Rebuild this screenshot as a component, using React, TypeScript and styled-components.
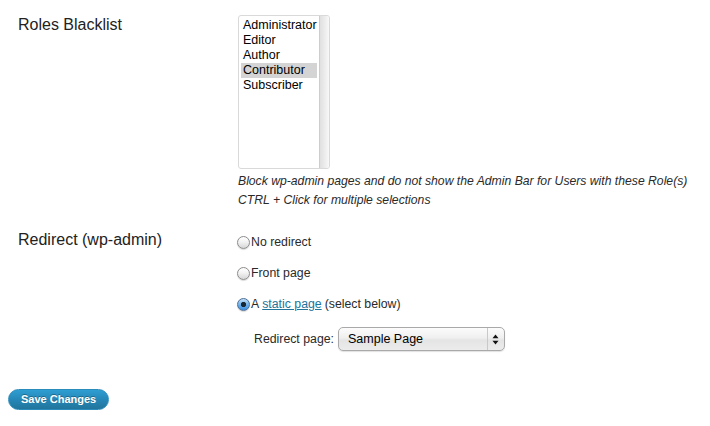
import React from 'react';
import styled, { createGlobalStyle } from 'styled-components';

const Global = createGlobalStyle`
  html, body { margin: 0; padding: 0; background: #fff; }
  body { font-family: "Liberation Sans", Arial, Helvetica, sans-serif; color: #333; }
  * { box-sizing: border-box; }
`;

const Page = styled.div`
  padding: 5px 8px 0 8px;
`;

const FormRow = styled.div`
  display: flex;
  align-items: flex-start;
`;

const Th = styled.div`
  flex: none;
  width: 220px;
  padding: 10px;
  font-size: 16px;
  line-height: 20px;
  color: #222;
`;

const Td = styled.div`
  flex: 1;
  padding: 10px;
`;

const ListBox = styled.div`
  width: 92px;
  height: 154px;
  border: 1px solid #d9d9d9;
  border-radius: 3px;
  display: flex;
  overflow: hidden;
  background: #fff;
`;

const Options = styled.div`
  flex: 1;
  padding: 2px;
  display: flex;
  flex-direction: column;
`;

const Option = styled.div<{ $selected?: boolean }>`
  height: 15px;
  line-height: 15px;
  padding-left: 2px;
  font-size: 12.5px;
  color: #000;
  white-space: nowrap;
  background: ${(p) => (p.$selected ? '#d4d4d4' : 'transparent')};
`;

const ScrollTrack = styled.div`
  flex: none;
  width: 11px;
  border-left: 1px solid #cdcdcd;
  background: linear-gradient(to right, #e0e0e0 0%, #eaeaea 40%, #f5f5f5 80%, #fdfdfd 100%);
`;

const Description = styled.div<{ $first?: boolean }>`
  margin-top: ${(p) => (p.$first ? '3px' : '0')};
  font-size: 12.2px;
  line-height: 19px;
  font-style: italic;
  color: #2a2a2a;
  white-space: nowrap;
`;

const RadioList = styled.div`
  margin-top: 2px;
  display: flex;
  flex-direction: column;
  gap: 11px;
`;

const RadioItem = styled.label`
  display: flex;
  align-items: center;
  height: 20px;
  font-size: 12.3px;
  color: #2a2a2a;
`;

const RadioCircle = styled.span<{ $checked?: boolean }>`
  flex: none;
  width: 13px;
  height: 13px;
  margin-left: -1px;
  margin-right: 1px;
  border-radius: 50%;
  border: 1px solid ${(p) => (p.$checked ? '#4d6f96' : '#8c8c8c')};
  background: ${(p) =>
    p.$checked
      ? 'radial-gradient(circle at 50% 50%, #1b2633 0, #1b2633 2.2px, rgba(27,38,51,0) 3px), linear-gradient(#c4e0f8, #6aaee9 55%, #3d8ee0)'
      : 'linear-gradient(#ffffff, #f2f2f2 45%, #d6d6d6)'};
  box-shadow: 0 1px 1px rgba(0, 0, 0, 0.15);
`;

const Link = styled.a`
  color: #21759b;
  text-decoration: underline;
  margin: 0 3px;
`;

const SelectRow = styled.div`
  margin-top: 13px;
  padding-left: 16px;
  display: flex;
  align-items: center;
  height: 24px;
  font-size: 12.3px;
  color: #2a2a2a;
`;

const SelectBox = styled.div`
  margin-left: 4px;
  width: 167px;
  height: 24px;
  border: 1px solid #a9a9a9;
  border-radius: 5px;
  background: linear-gradient(#fcfcfc, #efefef 45%, #e4e4e4 55%, #ececec);
  box-shadow: 0 1px 1px rgba(0, 0, 0, 0.12);
  display: flex;
  align-items: center;
`;

const SelectValue = styled.span`
  flex: 1;
  padding-left: 9px;
  font-size: 12.5px;
  color: #000;
`;

const SelectArrows = styled.span`
  flex: none;
  width: 17px;
  height: 100%;
  border-left: 1px solid #c9c9c9;
  display: flex;
  align-items: center;
  justify-content: center;
`;

const Submit = styled.div`
  padding-top: 28px;
`;

const PrimaryButton = styled.button`
  height: 21px;
  padding: 0 12px;
  border: 1px solid #298cba;
  border-radius: 11px;
  background: linear-gradient(#2e9ed1, #2587b8 50%, #21759b);
  color: #fff;
  font-family: "Liberation Sans", Arial, sans-serif;
  font-weight: bold;
  font-size: 11px;
  line-height: 19px;
  text-shadow: 0 -1px 0 rgba(0, 0, 0, 0.3);
  cursor: pointer;
`;

const roles = ['Administrator', 'Editor', 'Author', 'Contributor', 'Subscriber'];

export default function App() {
  return (
    <>
      <Global />
      <Page>
        <FormRow>
          <Th>Roles Blacklist</Th>
          <Td>
            <ListBox role="listbox" aria-multiselectable="true">
              <Options>
                {roles.map((r) => (
                  <Option key={r} $selected={r === 'Contributor'}>
                    {r}
                  </Option>
                ))}
              </Options>
              <ScrollTrack />
            </ListBox>
            <Description $first>
              Block wp-admin pages and do not show the Admin Bar for Users with these Role(s)
            </Description>
            <Description>CTRL + Click for multiple selections</Description>
          </Td>
        </FormRow>
        <FormRow>
          <Th>Redirect (wp-admin)</Th>
          <Td>
            <RadioList>
              <RadioItem>
                <RadioCircle />
                No redirect
              </RadioItem>
              <RadioItem>
                <RadioCircle />
                Front page
              </RadioItem>
              <RadioItem>
                <RadioCircle $checked />
                A<Link href="#">static page</Link>(select below)
              </RadioItem>
            </RadioList>
            <SelectRow>
              Redirect page:
              <SelectBox>
                <SelectValue>Sample Page</SelectValue>
                <SelectArrows>
                  <svg width="7" height="11" viewBox="0 0 7 11">
                    <path d="M3.5 0.5 L6.5 4.2 L0.5 4.2 Z" fill="#111" />
                    <path d="M3.5 10.5 L6.5 6.8 L0.5 6.8 Z" fill="#111" />
                  </svg>
                </SelectArrows>
              </SelectBox>
            </SelectRow>
          </Td>
        </FormRow>
        <Submit>
          <PrimaryButton>Save Changes</PrimaryButton>
        </Submit>
      </Page>
    </>
  );
}
